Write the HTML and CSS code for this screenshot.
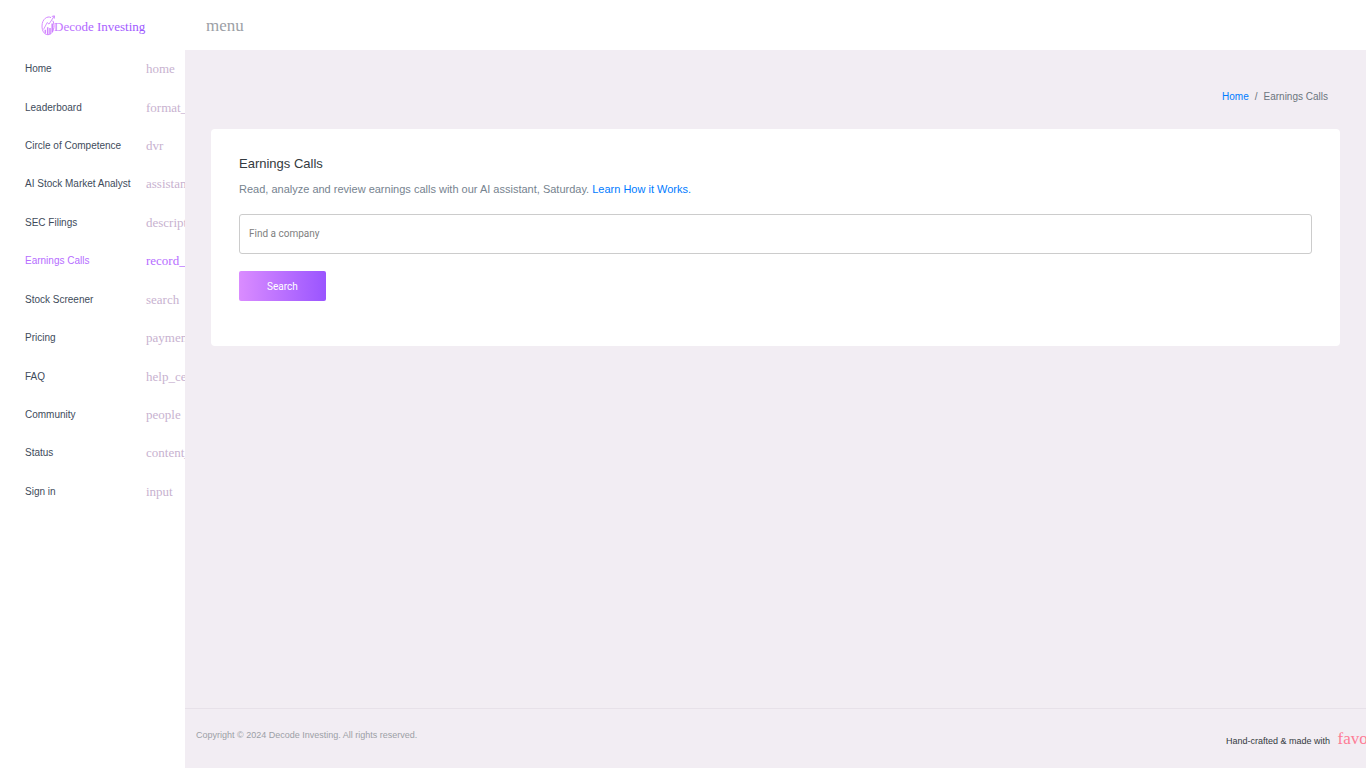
FILE: index.html
```html
<!DOCTYPE html>
<html lang="en">
<head>
<meta charset="utf-8">
<meta name="viewport" content="width=device-width, initial-scale=1">
<title>Earnings Calls - Decode Investing</title>
<link rel="stylesheet" href="styles.css">
</head>
<body>
<div class="app">
  <aside class="sidebar">
    <a class="brand" href="#" aria-label="Decode Investing">
      <svg class="brand-logo" viewBox="0 0 104 24" aria-hidden="true">
        <defs>
          <linearGradient id="brandFill" gradientUnits="userSpaceOnUse" x1="0" y1="0" x2="104" y2="0">
            <stop offset="0" stop-color="#d98cff"/>
            <stop offset="0.35" stop-color="#b266ff"/>
            <stop offset="1" stop-color="#9a55ff"/>
          </linearGradient>
        </defs>
        <g fill="none" stroke="url(#brandFill)">
          <path d="M10 4.600C6.500 2.500 1 6 1 13c0 5.500 2.500 8.700 6 8.700s6-3.700 6-9c0-2-.4-3.700-1.200-5"/>
          <path stroke-width=".9" d="M2.500 16.500 6.200 9.500l1.800 1.600L13.300 3M10.800 3.500l2.600-.7-.1 2.800"/>
          <path stroke-width="1.500" d="M4.300 20.500v-3.800M6.700 21.500v-7.300M9 21v-6M11.200 19V10.500"/>
        </g>
        <text class="brand-text" x="13" y="18" fill="url(#brandFill)">Decode Investing</text>
      </svg>
    </a>
    <nav class="nav" aria-label="Main">
      <a class="nav-link" href="#"><span class="nav-title">Home</span><i class="nav-icon">home</i></a>
      <a class="nav-link" href="#"><span class="nav-title">Leaderboard</span><i class="nav-icon">format_list_numbered</i></a>
      <a class="nav-link" href="#"><span class="nav-title">Circle of Competence</span><i class="nav-icon">dvr</i></a>
      <a class="nav-link" href="#"><span class="nav-title">AI Stock Market Analyst</span><i class="nav-icon">assistant</i></a>
      <a class="nav-link" href="#"><span class="nav-title">SEC Filings</span><i class="nav-icon">description</i></a>
      <a class="nav-link active" href="#" aria-current="page"><span class="nav-title">Earnings Calls</span><i class="nav-icon">record_voice_over</i></a>
      <a class="nav-link" href="#"><span class="nav-title">Stock Screener</span><i class="nav-icon">search</i></a>
      <a class="nav-link" href="#"><span class="nav-title">Pricing</span><i class="nav-icon">payment</i></a>
      <a class="nav-link" href="#"><span class="nav-title">FAQ</span><i class="nav-icon">help_center</i></a>
      <a class="nav-link" href="#"><span class="nav-title">Community</span><i class="nav-icon">people</i></a>
      <a class="nav-link" href="#"><span class="nav-title">Status</span><i class="nav-icon">content_paste</i></a>
      <a class="nav-link" href="#"><span class="nav-title">Sign in</span><i class="nav-icon">input</i></a>
    </nav>
  </aside>
  <div class="page">
    <header class="topbar">
      <button class="menu-button" type="button">menu</button>
    </header>
    <main class="content">
      <nav class="breadcrumb" aria-label="Breadcrumb">
        <a href="#">Home</a><span>/</span><span>Earnings Calls</span>
      </nav>
      <section class="card">
        <h1 class="card-title">Earnings Calls</h1>
        <p class="card-text">Read, analyze and review earnings calls with our AI assistant, Saturday. <a href="#">Learn How it Works.</a></p>
        <form class="search">
          <input class="search-input" type="text" placeholder="Find a company" aria-label="Find a company">
          <button class="search-button" type="button">Search</button>
        </form>
      </section>
    </main>
    <footer class="footer">
      <span class="copyright">Copyright © 2024 Decode Investing. All rights reserved.</span>
      <span class="credit">Hand-crafted &amp; made with <i class="heart">favorite</i></span>
    </footer>
  </div>
</div>
</body>
</html>
```
FILE: styles.css
```css
* {
  box-sizing: border-box;
}

body {
  margin: 0;
  background: #f2edf3;
  color: #343a40;
  font: 10px/16px "Liberation Sans", Arial, sans-serif;
}

a {
  color: #007bff;
  text-decoration: none;
}

.app {
  display: flex;
  min-height: 100vh;
}

.sidebar {
  flex: 0 0 185px;
  overflow: hidden;
  background: #fff;
}

.brand {
  display: flex;
  align-items: center;
  justify-content: center;
  height: 50px;
}

.brand-logo {
  width: 104px;
  height: 24px;
  overflow: visible;
}

.brand-text {
  font: 13px "Liberation Serif", "Times New Roman", serif;
}

.nav {
  display: grid;
  grid-auto-rows: 1fr;
  height: 461px;
}

.nav-link {
  display: grid;
  grid-template-columns: 121px auto;
  align-items: center;
  padding-left: 25px;
  color: #3e4b5b;
  white-space: nowrap;
}

.nav-icon {
  color: #c8b2d0;
  font: 13px/16px "Liberation Serif", "Times New Roman", serif;
}

.active,
.active .nav-icon {
  color: #b66dff;
}

.page {
  display: flex;
  flex: 1;
  flex-direction: column;
  min-width: 0;
}

.topbar {
  display: flex;
  align-items: center;
  height: 50px;
  padding: 2px 21px 0;
  background: #fff;
}

.menu-button {
  padding: 0;
  border: 0;
  background: none;
  color: #9c9fa6;
  font: 17px/24px "Liberation Serif", "Times New Roman", serif;
}

.content {
  flex: 1;
  padding: 39px 26px;
}

.breadcrumb {
  display: flex;
  justify-content: flex-end;
  gap: 6px;
  padding: 0 12px;
  margin-bottom: 24px;
  color: #6c757d;
}

.card {
  padding: 27px 28px 45px;
  border-radius: 4px;
  background: #fff;
}

.card-title {
  margin: 0 0 9px;
  color: #343a40;
  font-size: 13px;
  font-weight: 400;
  line-height: 16px;
}

.card-text {
  margin: 0 0 17px;
  color: #76838f;
  font-size: 11px;
  line-height: 16px;
}

.search {
  display: flex;
  flex-direction: column;
  align-items: flex-start;
  gap: 17px;
}

.search-input {
  width: 100%;
  height: 40px;
  padding: 0 9px 2px;
  border: 1px solid #ccc;
  border-radius: 3px;
  background: #fff;
  color: #343a40;
  font: 10px Roboto, sans-serif;
}

.search-input::placeholder {
  color: #808080;
  opacity: 1;
}

.search-button {
  height: 30px;
  padding: 0 28px;
  border: 0;
  border-radius: 2px;
  background: linear-gradient(to right, #da8cff, #9a55ff);
  color: #fff;
  font: 10px Roboto, sans-serif;
}

.footer {
  display: flex;
  justify-content: space-between;
  height: 60px;
  padding: 18px 0 0 11px;
  overflow: hidden;
  border-top: 1px solid #e7e1e9;
  font-size: 9px;
}

.copyright {
  color: #9c9fa6;
}

.credit {
  flex: 0 0 140px;
  min-width: 0;
  white-space: nowrap;
}

.heart {
  margin-left: 5px;
  color: #fe7c96;
  font: 17px/24px "Liberation Serif", "Times New Roman", serif;
}
```
